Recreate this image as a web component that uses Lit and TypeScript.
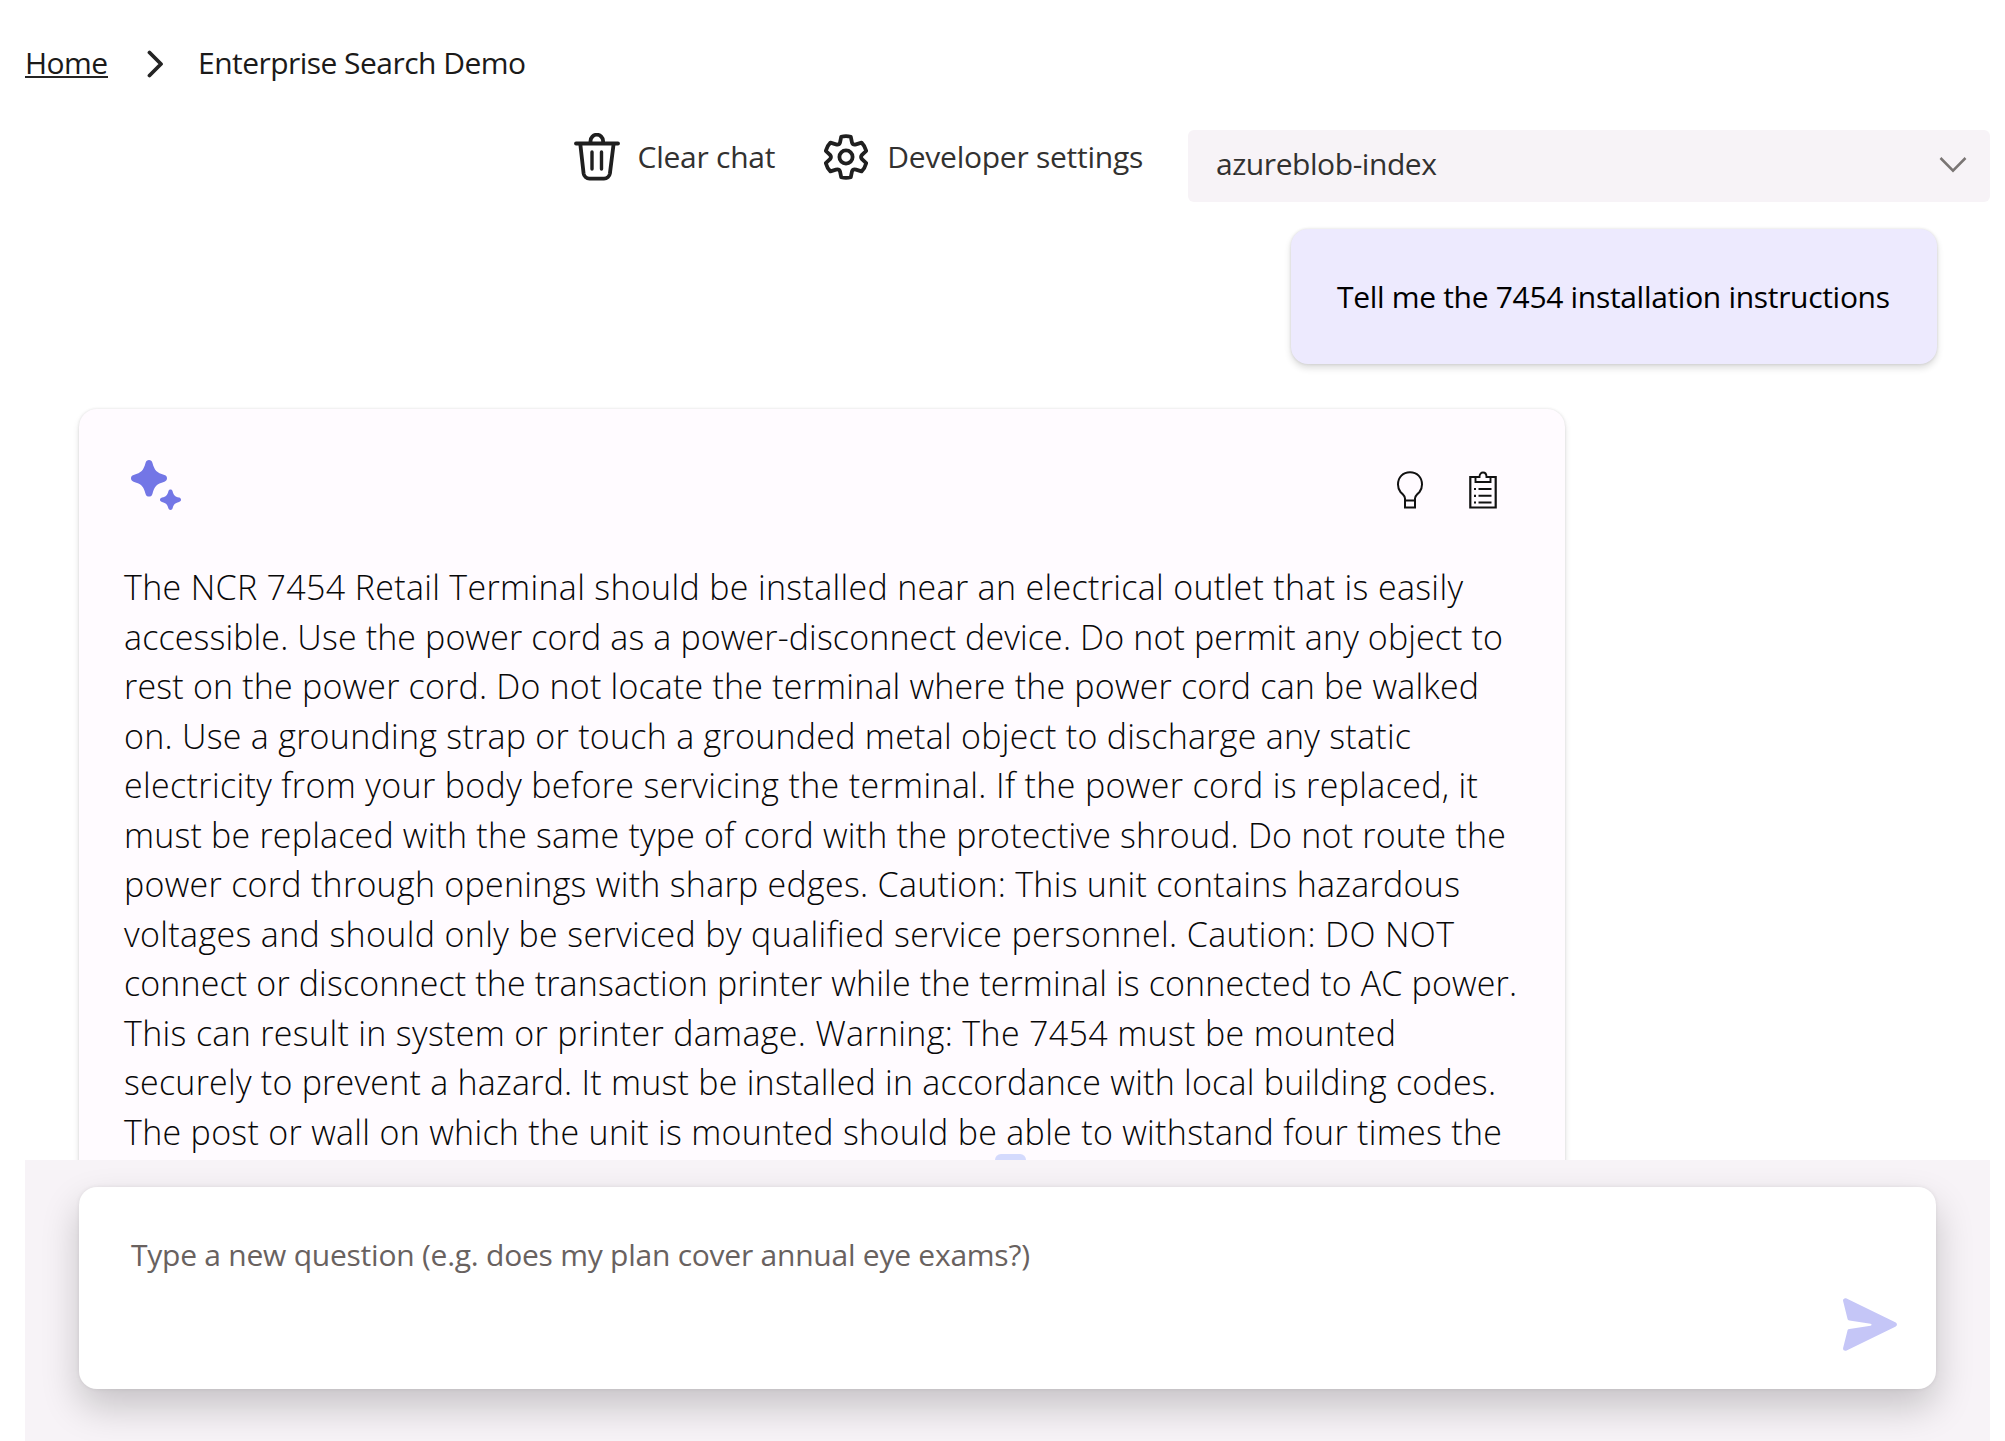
import { LitElement, html, css, svg } from "lit";
import { customElement, property } from "lit/decorators.js";

/** One line of text whose tracking is set so that it spans a given width. */
@customElement("fit-line")
class FitLine extends LitElement {
  @property({ type: Number }) span = 0;
  @property() text = "";
  static styles = css`
    :host { display: block; white-space: nowrap; }
  `;
  render() {
    return html`<span>${this.text}</span>`;
  }
  updated() {
    const el = this.renderRoot.querySelector("span") as HTMLElement;
    el.style.letterSpacing = "0px";
    const natural = el.getBoundingClientRect().width;
    el.style.letterSpacing = (this.span - natural) / (this.text.length - 1) + "px";
  }
}

const answer: [string, number][] = [
  ["The NCR 7454 Retail Terminal should be installed near an electrical outlet that is easily", 1339],
  ["accessible. Use the power cord as a power-disconnect device. Do not permit any object to", 1379],
  ["rest on the power cord. Do not locate the terminal where the power cord can be walked", 1355],
  ["on. Use a grounding strap or touch a grounded metal object to discharge any static", 1287],
  ["electricity from your body before servicing the terminal. If the power cord is replaced, it", 1354],
  ["must be replaced with the same type of cord with the protective shroud. Do not route the", 1382],
  ["power cord through openings with sharp edges. Caution: This unit contains hazardous", 1336],
  ["voltages and should only be serviced by qualified service personnel. Caution: DO NOT", 1330],
  ["connect or disconnect the transaction printer while the terminal is connected to AC power.", 1393],
  ["This can result in system or printer damage. Warning: The 7454 must be mounted", 1272],
  ["securely to prevent a hazard. It must be installed in accordance with local building codes.", 1372],
  ["The post or wall on which the unit is mounted should be able to withstand four times the", 1378],
];

const icon = (w: number, h: number, body: unknown) => html`<svg width=${w} height=${h} viewBox="0 0 ${w} ${h}" fill="none">${body}</svg>`;

const chevronRight = icon(18, 28, svg`<path d="M2.5 2.5 14 14 2.5 25.5" stroke="#242424" stroke-width="3.8" stroke-linecap="round" stroke-linejoin="round"/>`);
const trash = icon(46, 48, svg`<g stroke="#1f1f1f" stroke-width="3.8" stroke-linecap="round" stroke-linejoin="round"><path d="M2 10.500H44"/><path d="M16.500 10V8a6.300 6.300 0 0 1 12.600 0V10"/><path d="M6.300 11 9.600 40.500A6 6 0 0 0 15.500 45.600H30a6 6 0 0 0 5.900-5.100L39.600 11"/><path d="M18 19V36M27.500 19V36" stroke-width="3.400"/></g>`);
const gear = icon(44, 46, svg`<g stroke="#1f1f1f" stroke-width="3.8" stroke-linejoin="round"><path d="M17.2 2.8Q22 1.4 26.8 2.8L28 8.6Q29 11.3 32 10.4L37.6 8.6Q41 12 42.2 16.8L38 20.8Q36.2 23 38 25.2L42.2 29.2Q41 34 37.6 37.4L32 35.6Q29 34.7 28 37.4L26.8 43.2Q22 44.6 17.2 43.2L16 37.4Q15 34.7 12 35.6L6.4 37.4Q3 34 1.8 29.2L6 25.2Q7.8 23 6 20.8L1.8 16.8Q3 12 6.4 8.6L12 10.4Q15 11.3 16 8.6Z"/><circle cx="22" cy="23" r="6.6"/></g>`);
const chevronDown = icon(28, 18, svg`<path d="M1.5 2 14 14.7 26.5 2" stroke="#7a7574" stroke-width="2.5"/>`);
const sparkle = icon(50, 50, svg`<g fill="#7376e6"><path d="M18 0C19.700 0 20.900 1 21.400 2.700C23.600 10.500 25.500 12.500 33.400 14.900C35.300 15.500 36 16.800 36 18.300S35.300 21.100 33.400 21.700C25.500 24.100 23.600 26.100 21.400 33.900C20.900 35.600 19.700 36.600 18 36.600S15.100 35.600 14.600 33.900C12.400 26.100 10.500 24.100 2.600 21.700C.7 21.100 0 19.800 0 18.300S.7 15.500 2.600 14.900C10.500 12.500 12.400 10.500 14.600 2.700C15.100 1 16.300 0 18 0Z"/><path d="M39.500 29.500C40.600 29.500 41.300 30 41.600 31.200C42.700 35.300 43.800 36.400 48 37.600C49.500 38 50 38.800 50 39.800S49.500 41.500 48 41.900C43.800 43.100 42.700 44.200 41.600 48.300C41.300 49.500 40.600 50 39.500 50S37.700 49.500 37.400 48.300C36.300 44.200 35.200 43.100 31 41.900C29.500 41.500 29 40.700 29 39.800S29.500 38 31 37.600C35.200 36.400 36.300 35.300 37.400 31.200C37.700 30 38.400 29.500 39.500 29.500Z"/></g>`);
const bulb = icon(26, 38, svg`<g stroke="#111" stroke-width="2"><path d="M8 36.500V27.500Q8 25.500 6 23.500L3.500 21Q1 18 1 13.500C1 6 6 1.300 13 1.300S25 6 25 13.500Q25 18 22.500 21L20 23.500Q18 25.500 18 27.500V36.500Z"/><path d="M8 29.500H18"/></g>`);
const clipboard = icon(28, 38, svg`<g stroke="#111" stroke-width="2.200"><path d="M7 6H1.300V36.500H26.700V6H21"/><path d="M6.500 6V11H21.500V6H17.500C17.500 0 10.500 0 10.500 6Z" stroke-width="1.900"/><path d="M9.500 18H22.500M9.500 24.800H22.500M9.500 31.500H22.500" stroke-width="2"/><path d="M5 18H7M5 24.800H7M5 31.500H7"/></g>`);
const send = icon(54, 53, svg`<path d="M3.600.4 52.300 24.300C54.500 25.500 54.500 27.600 52.300 28.800L3.600 52.600C1.500 53.400-.3 52 .1 50L4.500 32.500C4.800 31.300 5.300 31 6.500 30.900L27.500 27.700C29 27.400 29 26 27.500 25.700L6.500 22.600C5.300 22.400 4.800 22 4.500 20.800L.1 3C-.3 1 1.500-.4 3.600.4Z" fill="#c5c6f7"/>`);

@customElement("app-root")
export class AppRoot extends LitElement {
  static styles = css`
    * { box-sizing: border-box; }
    :host { display: block; }
    svg { display: block; flex: none; }
    .page {
      width: 2005px; height: 1441px; overflow: hidden; background: #fff;
      display: flex; flex-direction: column; padding: 0 15px 0 25px;
      font-family: "Open Sans", "Noto Sans", sans-serif; font-size: 30px; line-height: 40px; color: #1b1a19;
    }
    .crumbs { height: 130px; display: flex; align-items: flex-start; padding-top: 43px; flex: none; }
    .home { border-bottom: 2px solid #242424; height: 35px; width: 83px; }
    .crumbs svg { margin: 7px 33px 0 39px; }
    .tools { height: 71px; display: flex; justify-content: flex-end; flex: none; color: #323130; }
    .tool { display: flex; height: 54px; align-items: center; }
    .clear { gap: 17px; margin-right: 49px; }
    .settings { gap: 19px; margin-right: 45px; }
    .select {
      width: 802px; height: 72px; background: #f7f3f7; border-radius: 6px;
      display: flex; align-items: center; justify-content: space-between; padding: 0 23px 0 28px;
    }
    .select fit-line { margin-top: -4px; }
    .select svg { margin-top: -2px; }
    .chat { flex: 1; min-height: 0; overflow: hidden; padding: 28px 53px 0 54px; display: flex; flex-direction: column; }
    .user {
      align-self: flex-end; width: 646px; height: 135px; border-radius: 17px; background: #edeafe; color: #000;
      display: flex; align-items: center; padding-left: 46px; flex: none;
      box-shadow: 0 4px 7px rgba(0,0,0,.14), 0 0 3px rgba(0,0,0,.12);
    }
    .answer {
      margin-top: 45px; width: 1486px; height: 900px; flex: none; border-radius: 18px; background: #fffbff;
      padding: 51px 45px 0; box-shadow: 0 4px 7px rgba(0,0,0,.1), 0 0 3px rgba(0,0,0,.12); color: #080808;
    }
    .top { display: flex; align-items: flex-start; padding: 0 23px 0 7px; height: 103px; }
    .actions { margin-left: auto; margin-top: 11px; display: flex; gap: 46px; }
    .body { font-size: 34px; line-height: 49.5px; font-weight: 300; }
    .cite { width: 31px; height: 27px; margin: -3px 0 0 871px; background: #d4dafd; border-radius: 6px; }
    .dock { height: 281px; flex: none; background: #f7f3f7; padding: 27px 54px 51px 54px; }
    .input {
      height: 202px; background: #fff; border-radius: 18px; display: flex; justify-content: space-between;
      padding: 48px 39px 38px 52px; color: #69625f;
      box-shadow: 0 18px 38px rgba(0,0,0,.2), 0 0 4px rgba(0,0,0,.08);
    }
    .input svg { align-self: flex-end; }
  `;
  render() {
    return html`<div class="page">
      <nav class="crumbs">
        <div class="home"><fit-line text="Home" span="83"></fit-line></div>
        ${chevronRight}
        <fit-line text="Enterprise Search Demo" span="328"></fit-line>
      </nav>
      <div class="tools">
        <div class="tool clear">${trash}<fit-line text="Clear chat" span="138"></fit-line></div>
        <div class="tool settings">${gear}<fit-line text="Developer settings" span="256"></fit-line></div>
        <div class="select"><fit-line text="azureblob-index" span="221"></fit-line>${chevronDown}</div>
      </div>
      <main class="chat">
        <div class="user"><fit-line text="Tell me the 7454 installation instructions" span="553"></fit-line></div>
        <section class="answer">
          <div class="top">${sparkle}<div class="actions">${bulb}${clipboard}</div></div>
          <div class="body">${answer.map(([t, w]) => html`<fit-line .text=${t} .span=${w}></fit-line>`)}</div>
          <div class="cite"></div>
        </section>
      </main>
      <footer class="dock">
        <div class="input"><fit-line text="Type a new question (e.g. does my plan cover annual eye exams?)" span="899"></fit-line>${send}</div>
      </footer>
    </div>`;
  }
}
